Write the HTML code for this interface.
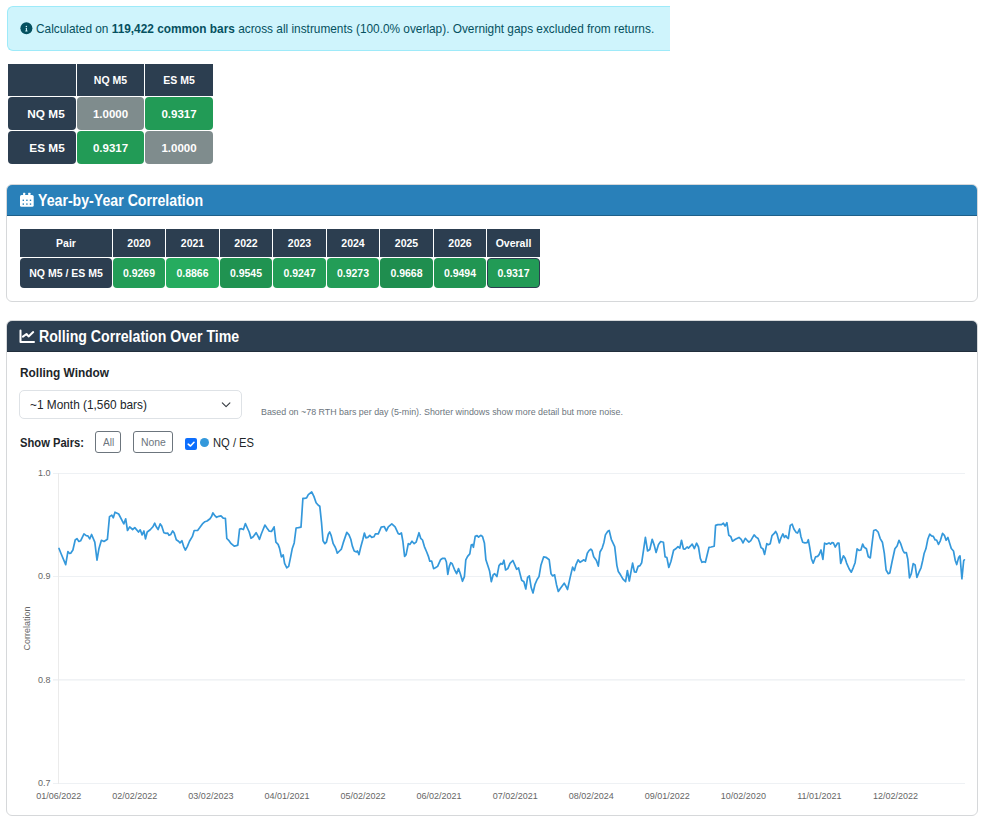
<!DOCTYPE html>
<html><head><meta charset="utf-8"><style>
*{box-sizing:border-box;margin:0;padding:0}
html,body{width:986px;height:820px;overflow:hidden;background:#fff;font-family:"Liberation Sans",sans-serif;color:#212529}
.a{position:absolute;white-space:nowrap}
.alert{left:7px;top:6px;width:663px;height:45px;background:#cff4fc;border:1px solid #9eeaf9;border-right:none;border-radius:6px 0 0 6px}
.cell{position:absolute;color:#fff;font-weight:bold;display:flex;align-items:center;justify-content:center;white-space:nowrap}
.hd{background:#2c3e50}
.rnd{border-radius:4px}
.card{position:absolute;left:6px;width:972px;border:1px solid #d6d8da;border-radius:6px;background:#fff;overflow:hidden}
.card .head{position:absolute;left:0;top:0;right:0;height:31px;border-bottom:1px solid rgba(0,0,0,.25)}
.title{color:#fff;font-weight:bold;font-size:16px;line-height:18px;transform:scaleX(.884);transform-origin:0 0}
.lbl{font-size:12px;fill:#666;font-family:"Liberation Sans",sans-serif}
</style></head><body>
<div class="a alert"></div>
<svg class="a" style="left:20px;top:22px" width="13" height="13" viewBox="0 0 13 13"><circle cx="6.4" cy="6.3" r="6" fill="#055160"/><path d="M5.6 5.9 H7.0 V8.6 H7.5 V9.4 H5.3 V8.6 H5.9 V6.6 H5.6 Z" fill="#cff4fc"/><circle cx="6.35" cy="4.5" r=".75" fill="#cff4fc"/></svg>
<div class="a" style="left:36px;top:22px;color:#055160;font-size:11.85px;line-height:15px">Calculated on <b>119,422 common bars</b> across all instruments (100.0% overlap). Overnight gaps excluded from returns.</div>
<div class="cell hd" style="left:8px;top:64px;width:68px;height:32px"></div>
<div class="cell hd" style="left:77px;top:64px;width:67px;height:32px;font-size:10.5px"><span>NQ M5</span></div>
<div class="cell hd" style="left:145px;top:64px;width:68px;height:32px;font-size:10.5px"><span>ES M5</span></div>
<div class="cell hd rnd" style="left:8px;top:97px;width:68px;height:33px;font-size:11.8px;justify-content:flex-end;padding-right:11.3px"><span>NQ M5</span></div>
<div class="cell rnd" style="left:77px;top:97px;width:67px;height:33px;font-size:11.5px;background:#7f8c8d"><span>1.0000</span></div>
<div class="cell rnd" style="left:145px;top:97px;width:68px;height:33px;font-size:11.5px;background:#229b56">0.9317</div>
<div class="cell hd rnd" style="left:8px;top:131px;width:68px;height:33px;font-size:11.8px;justify-content:flex-end;padding-right:11.3px">ES M5</div>
<div class="cell rnd" style="left:77px;top:131px;width:67px;height:33px;font-size:11.5px;background:#229b56">0.9317</div>
<div class="cell rnd" style="left:145px;top:131px;width:68px;height:33px;font-size:11.5px;background:#7f8c8d">1.0000</div>
<div class="card" style="top:184px;height:118px"><div class="head" style="background:#2980b9"></div></div>
<svg class="a" style="left:19px;top:192px" width="16" height="16" viewBox="0 0 16 16"><rect x="1" y="3" width="13.7" height="11.8" rx="1.6" fill="#fff"/><rect x="4.1" y="0.8" width="2.1" height="3" rx=".5" fill="#fff"/><rect x="9.2" y="0.8" width="2.3" height="3" rx=".5" fill="#fff"/><g fill="#2980b9"><rect x="3.6" y="7.6" width="1.4" height="1.4"/><rect x="7.2" y="7.6" width="1.4" height="1.4"/><rect x="10.8" y="7.6" width="1.4" height="1.4"/><rect x="3.6" y="11.4" width="1.4" height="1.4"/><rect x="7.2" y="11.4" width="1.4" height="1.4"/><rect x="10.8" y="11.4" width="1.4" height="1.4"/></g></svg>
<div class="a title" style="left:38.3px;top:192.3px">Year-by-Year Correlation</div>
<div class="cell hd" style="left:20px;top:229px;width:92px;height:28px;font-size:10.5px"><span>Pair</span></div>
<div class="cell hd rnd" style="left:20px;top:258px;width:92px;height:30px;font-size:10.5px"><span>NQ M5 / ES M5</span></div>
<div class="cell hd" style="left:113px;top:229px;width:52px;height:28px;font-size:10.5px"><span>2020</span></div>
<div class="cell rnd" style="left:113px;top:258px;width:52px;height:30px;font-size:10.5px;background:#239d57;"><span>0.9269</span></div>
<div class="cell hd" style="left:166px;top:229px;width:53px;height:28px;font-size:10.5px"><span>2021</span></div>
<div class="cell rnd" style="left:166px;top:258px;width:53px;height:30px;font-size:10.5px;background:#26ac5f;"><span>0.8866</span></div>
<div class="cell hd" style="left:220px;top:229px;width:52px;height:28px;font-size:10.5px"><span>2022</span></div>
<div class="cell rnd" style="left:220px;top:258px;width:52px;height:30px;font-size:10.5px;background:#209351;"><span>0.9545</span></div>
<div class="cell hd" style="left:273px;top:229px;width:53px;height:28px;font-size:10.5px"><span>2023</span></div>
<div class="cell rnd" style="left:273px;top:258px;width:53px;height:30px;font-size:10.5px;background:#239e57;"><span>0.9247</span></div>
<div class="cell hd" style="left:327px;top:229px;width:52px;height:28px;font-size:10.5px"><span>2024</span></div>
<div class="cell rnd" style="left:327px;top:258px;width:52px;height:30px;font-size:10.5px;background:#239d57;"><span>0.9273</span></div>
<div class="cell hd" style="left:380px;top:229px;width:53px;height:28px;font-size:10.5px"><span>2025</span></div>
<div class="cell rnd" style="left:380px;top:258px;width:53px;height:30px;font-size:10.5px;background:#1f8e4f;"><span>0.9668</span></div>
<div class="cell hd" style="left:434px;top:229px;width:52px;height:28px;font-size:10.5px"><span>2026</span></div>
<div class="cell rnd" style="left:434px;top:258px;width:52px;height:30px;font-size:10.5px;background:#219552;"><span>0.9494</span></div>
<div class="cell hd" style="left:487px;top:229px;width:53px;height:28px;font-size:10.5px"><span>Overall</span></div>
<div class="cell rnd" style="left:487px;top:258px;width:53px;height:30px;font-size:10.5px;background:#229b56;border:1px solid #2c3e50;"><span>0.9317</span></div>
<div class="card" style="top:320px;height:496px"><div class="head" style="background:#2c3e50"></div></div>
<svg class="a" style="left:16px;top:326px" width="22" height="20" viewBox="0 0 22 20"><path d="M4.5 4.6 V16 H18" fill="none" stroke="#fff" stroke-width="2" stroke-linecap="round" stroke-linejoin="round"/><path d="M6.9 10.6 L10.5 8 L12.6 10.4 L17.2 6.1" fill="none" stroke="#fff" stroke-width="2" stroke-linecap="round" stroke-linejoin="round"/></svg>
<div class="a title" style="left:38.8px;top:328.3px">Rolling Correlation Over Time</div>
<div class="a" style="left:19.5px;top:366px;font-weight:bold;font-size:12.5px;line-height:15px;transform:scaleX(.95);transform-origin:0 0">Rolling Window</div>
<div class="a" style="left:19px;top:390px;width:223px;height:29px;border:1px solid #dee2e6;border-radius:5px;background:#fff"></div>
<div class="a" style="left:30px;top:397px;font-size:13.3px;line-height:16px;transform:scaleX(.891);transform-origin:0 0">~1 Month (1,560 bars)</div>
<svg class="a" style="left:220px;top:400px" width="12" height="9" viewBox="0 0 12 9"><path d="M2.3 2.8 L6.1 6.6 L9.9 2.8" fill="none" stroke="#343a40" stroke-width="1.1" stroke-linecap="round" stroke-linejoin="round"/></svg>
<div class="a" style="left:261px;top:406px;font-size:9.5px;line-height:11px;color:#6c757d;transform:scaleX(.935);transform-origin:0 0">Based on ~78 RTH bars per day (5-min). Shorter windows show more detail but more noise.</div>
<div class="a" style="left:19.5px;top:436px;font-weight:bold;font-size:12.5px;line-height:15px;transform:scaleX(.895);transform-origin:0 0">Show Pairs:</div>
<div class="a" style="left:95px;top:431px;width:26px;height:22px;border:1px solid #6c757d;border-radius:3px"></div>
<div class="a" style="left:103px;top:436px;font-size:11.5px;line-height:13px;color:#6c757d;transform:scaleX(.875);transform-origin:0 0">All</div>
<div class="a" style="left:133px;top:431px;width:40px;height:22px;border:1px solid #6c757d;border-radius:3px"></div>
<div class="a" style="left:141px;top:436px;font-size:11.5px;line-height:13px;color:#6c757d;transform:scaleX(.905);transform-origin:0 0">None</div>
<svg class="a" style="left:185px;top:438px" width="12" height="12" viewBox="0 0 12 12"><rect x="0" y="0" width="12" height="12" rx="2" fill="#0d6efd"/><path d="M3.2 6.2 L5.5 8 L9 4.3" fill="none" stroke="#fff" stroke-width="1.6" stroke-linecap="round" stroke-linejoin="round"/></svg>
<div class="a" style="left:200px;top:438px;width:9px;height:9px;border-radius:50%;background:#3498db"></div>
<div class="a" style="left:212.5px;top:436px;font-size:12.5px;line-height:15px;transform:scaleX(.895);transform-origin:0 0">NQ / ES</div>
<svg class="a" style="left:0;top:0" width="986" height="820" viewBox="0 0 986 820"><g stroke="#eef1f4" stroke-width="1" shape-rendering="crispEdges"><line x1="53" y1="473.5" x2="965" y2="473.5"/><line x1="53" y1="576.5" x2="965" y2="576.5"/><line x1="53" y1="783.5" x2="965" y2="783.5"/><line x1="53" y1="679.9" x2="965" y2="679.9" shape-rendering="auto" stroke="#e6eaee"/><line x1="58.5" y1="473" x2="58.5" y2="784" stroke="#ebebeb"/></g><g font-family="Liberation Sans" font-size="9px" fill="#666"><text x="50.5" y="475.6" text-anchor="end">1.0</text><text x="50.5" y="579.1" text-anchor="end">0.9</text><text x="50.5" y="682.6" text-anchor="end">0.8</text><text x="50.5" y="785.6" text-anchor="end">0.7</text><text x="58.75" y="799" text-anchor="middle">01/06/2022</text><text x="134.82" y="799" text-anchor="middle">02/02/2022</text><text x="210.89" y="799" text-anchor="middle">03/02/2023</text><text x="286.96" y="799" text-anchor="middle">04/01/2021</text><text x="363.03" y="799" text-anchor="middle">05/02/2022</text><text x="439.10" y="799" text-anchor="middle">06/02/2021</text><text x="515.17" y="799" text-anchor="middle">07/02/2021</text><text x="591.24" y="799" text-anchor="middle">08/02/2024</text><text x="667.31" y="799" text-anchor="middle">09/01/2022</text><text x="743.38" y="799" text-anchor="middle">10/02/2020</text><text x="819.45" y="799" text-anchor="middle">11/01/2021</text><text x="895.52" y="799" text-anchor="middle">12/02/2022</text><text transform="translate(30.1,628.5) rotate(-90)" text-anchor="middle">Correlation</text></g><path d="M59.0,548.5 L60.9,553.2 L65.7,564.6 L67.9,551.7 L69.6,553.5 L70.7,553.2 L72.9,550.0 L75.2,540.0 L77.0,538.6 L78.9,541.5 L80.6,540.8 L84.0,533.9 L86.2,535.6 L87.9,535.9 L89.7,538.9 L91.6,534.5 L94.8,542.2 L97.0,560.2 L98.9,548.8 L101.4,540.3 L104.0,541.5 L107.4,539.3 L109.5,516.6 L111.8,515.1 L113.3,517.8 L115.0,512.2 L118.7,514.0 L123.8,523.9 L125.7,518.8 L127.5,530.5 L129.7,526.9 L132.6,529.5 L134.8,527.6 L138.5,532.0 L140.2,529.8 L142.1,534.9 L143.9,531.0 L145.5,538.9 L147.2,532.0 L150.2,529.8 L152.9,526.8 L154.7,523.2 L156.1,526.5 L158.1,529.5 L160.2,523.9 L161.7,526.1 L163.9,532.7 L166.1,533.4 L167.6,533.0 L169.0,535.3 L170.8,534.4 L172.7,530.9 L174.2,533.0 L176.3,539.7 L178.5,541.2 L180.0,542.9 L181.9,540.7 L183.7,546.6 L185.4,550.0 L187.3,546.6 L189.5,541.2 L192.4,536.4 L194.2,530.5 L195.7,530.5 L197.6,530.5 L199.8,527.6 L202.4,523.9 L204.9,521.7 L207.1,521.0 L210.0,518.8 L211.5,516.6 L212.9,512.9 L214.4,515.1 L216.6,517.3 L218.8,516.3 L221.0,515.9 L223.2,518.1 L225.4,518.3 L226.8,538.5 L229.0,540.7 L231.2,543.7 L234.2,546.2 L236.4,545.6 L237.8,545.1 L239.6,529.0 L241.5,528.7 L243.4,529.5 L245.4,523.6 L247.8,529.0 L249.2,532.0 L251.0,538.3 L253.2,536.8 L256.1,532.7 L257.6,535.3 L259.5,539.3 L261.2,534.2 L263.0,529.8 L264.9,525.1 L267.1,528.3 L269.3,531.2 L271.5,531.5 L274.1,526.8 L275.9,542.2 L278.1,544.4 L279.5,548.1 L281.4,556.8 L283.2,554.9 L284.6,563.4 L286.8,567.8 L288.7,566.4 L290.5,557.6 L292.2,548.8 L294.2,542.9 L296.1,528.0 L298.5,527.6 L301.0,527.1 L302.9,498.3 L305.1,498.3 L306.6,497.9 L308.3,494.6 L311.7,492.0 L313.9,496.4 L316.1,502.7 L318.3,505.2 L319.8,506.3 L321.5,522.4 L323.0,540.7 L324.9,543.7 L326.4,542.2 L328.3,534.2 L329.7,532.0 L331.2,535.6 L333.2,543.7 L335.1,547.0 L335.9,548.8 L337.3,553.2 L339.5,551.0 L341.4,549.1 L343.2,542.9 L346.8,532.4 L349.0,534.9 L350.8,539.3 L352.3,545.9 L354.2,551.0 L356.4,552.0 L357.5,551.0 L359.0,554.6 L360.7,547.3 L362.9,539.3 L364.4,533.0 L365.9,537.8 L367.8,537.4 L369.8,535.3 L371.7,537.4 L373.9,536.8 L375.4,533.9 L378.3,533.9 L381.2,527.1 L384.2,526.5 L386.4,530.9 L388.3,526.8 L391.8,523.9 L395.1,526.8 L398.1,533.4 L399.5,534.2 L401.4,533.0 L402.9,541.5 L404.6,556.4 L406.1,554.6 L408.3,543.7 L409.8,544.4 L412.0,541.2 L414.2,543.7 L416.1,542.2 L419.0,532.7 L420.7,538.3 L422.5,540.0 L424.4,546.6 L426.9,552.5 L428.3,556.1 L429.8,561.2 L431.7,561.2 L433.6,568.6 L435.4,567.8 L437.6,566.4 L440.5,559.8 L442.7,558.3 L444.9,558.3 L446.4,562.0 L447.8,574.4 L449.3,566.4 L450.7,562.7 L452.2,563.7 L454.4,569.3 L456.6,573.7 L458.5,568.6 L460.3,573.7 L462.5,581.3 L464.4,576.6 L465.8,559.8 L467.6,556.4 L469.8,553.9 L471.2,545.1 L472.4,544.4 L473.4,547.3 L475.2,536.4 L477.1,535.6 L478.6,537.1 L480.7,535.3 L482.5,536.4 L484.4,542.9 L485.9,559.8 L487.8,565.6 L489.5,570.7 L491.3,581.7 L493.2,574.8 L494.7,573.7 L496.9,576.6 L499.0,565.6 L500.9,563.4 L502.4,564.2 L503.9,560.2 L505.6,570.0 L507.8,568.6 L510.0,563.4 L512.9,560.5 L515.1,565.6 L516.6,569.3 L518.5,567.8 L520.0,573.7 L521.7,580.3 L523.9,581.7 L525.8,589.0 L527.6,577.3 L529.3,575.9 L531.2,587.6 L533.0,593.0 L534.9,584.7 L537.1,579.5 L539.0,576.6 L541.0,564.9 L543.7,556.8 L545.9,557.3 L549.2,559.8 L551.0,573.7 L552.7,575.9 L554.6,574.8 L556.5,584.7 L558.3,591.5 L560.5,588.3 L564.2,583.2 L565.9,586.1 L567.5,589.5 L570.0,578.1 L572.6,567.1 L574.4,570.5 L575.9,564.9 L578.1,559.8 L580.0,562.3 L581.7,561.2 L583.9,559.8 L585.4,561.2 L587.3,553.2 L589.0,550.6 L590.8,549.1 L592.0,550.3 L593.7,556.8 L596.4,560.5 L598.3,566.1 L600.0,552.0 L602.2,548.1 L604.0,542.2 L605.4,534.9 L607.8,531.2 L609.2,530.5 L611.3,539.3 L614.7,546.6 L616.9,565.6 L618.3,571.5 L620.5,574.8 L623.0,579.2 L625.6,581.7 L627.4,570.5 L629.3,581.0 L630.8,572.9 L632.6,563.1 L634.4,571.9 L636.1,572.2 L638.1,566.4 L640.0,565.6 L641.7,562.7 L643.5,550.3 L645.4,537.4 L647.6,551.0 L649.8,549.5 L652.2,539.3 L654.2,545.1 L656.1,552.5 L658.5,544.4 L660.7,541.5 L663.4,542.2 L665.1,556.8 L666.9,557.6 L668.8,567.5 L671.0,561.2 L673.6,550.3 L676.1,548.5 L678.0,546.6 L679.8,548.1 L681.5,540.3 L683.4,548.8 L684.9,549.1 L687.1,547.0 L688.5,548.1 L690.3,546.2 L692.2,544.1 L694.4,548.5 L696.6,543.2 L698.5,547.0 L700.3,558.3 L702.0,562.3 L703.9,561.7 L705.4,562.3 L709.0,547.3 L711.2,547.0 L714.2,546.2 L715.6,525.4 L717.8,524.6 L721.5,524.6 L723.4,523.2 L725.1,526.1 L726.9,522.7 L728.8,535.3 L730.7,536.4 L732.5,541.2 L735.4,539.3 L739.0,537.4 L741.2,539.3 L743.0,542.9 L745.3,538.3 L747.1,540.3 L748.9,542.2 L750.8,540.7 L754.1,534.9 L756.1,537.1 L758.1,538.5 L759.5,542.2 L761.0,547.6 L762.9,548.8 L764.6,554.4 L766.8,543.7 L768.3,544.7 L770.2,543.7 L772.0,535.6 L774.2,533.4 L775.6,531.5 L777.1,534.2 L779.3,542.9 L781.0,537.8 L782.9,533.9 L784.4,537.4 L785.9,535.6 L786.9,537.4 L788.3,538.5 L790.3,525.4 L792.2,524.2 L793.9,529.0 L796.1,532.4 L797.6,533.0 L799.5,529.0 L800.9,536.4 L802.7,542.2 L804.9,542.9 L807.1,542.6 L808.3,539.7 L809.7,547.3 L811.5,559.0 L813.2,563.1 L815.6,556.8 L817.6,556.4 L819.1,554.6 L821.0,550.0 L822.9,559.3 L824.6,543.2 L826.8,544.1 L829.0,542.9 L830.5,544.1 L832.0,542.6 L833.4,542.9 L835.2,547.0 L837.5,543.2 L839.0,543.2 L840.7,563.4 L843.4,555.8 L845.1,558.3 L846.6,563.1 L849.2,569.0 L851.3,572.2 L853.2,567.8 L855.1,562.7 L857.1,548.8 L859.0,550.3 L860.9,550.0 L862.7,544.1 L864.2,547.3 L866.4,548.8 L868.3,556.8 L870.3,557.9 L873.7,530.5 L875.9,529.8 L878.1,532.0 L880.2,538.6 L882.4,542.2 L884.3,553.2 L886.1,570.0 L888.3,573.7 L889.8,573.0 L892.0,562.0 L894.9,548.8 L897.1,545.9 L899.0,540.3 L900.7,543.7 L902.9,550.3 L904.4,552.9 L906.3,552.5 L907.8,559.1 L909.5,577.8 L911.3,573.7 L913.2,563.7 L915.1,564.9 L916.9,577.4 L919.0,572.2 L921.0,567.8 L922.7,560.5 L924.2,553.2 L925.9,548.8 L927.8,539.3 L929.7,534.2 L931.5,535.9 L933.3,536.4 L935.2,540.0 L936.6,540.0 L938.5,544.4 L940.3,540.8 L942.5,533.4 L944.4,535.3 L946.1,540.3 L947.9,537.4 L949.8,543.7 L951.3,548.5 L953.5,551.0 L955.2,560.2 L956.7,564.6 L958.6,557.6 L960.0,555.8 L961.9,578.8 L963.7,560.5 L964.4,559.8" fill="none" stroke="#3498db" stroke-width="1.7" stroke-linejoin="round" stroke-linecap="round"/></svg>
</body></html>
